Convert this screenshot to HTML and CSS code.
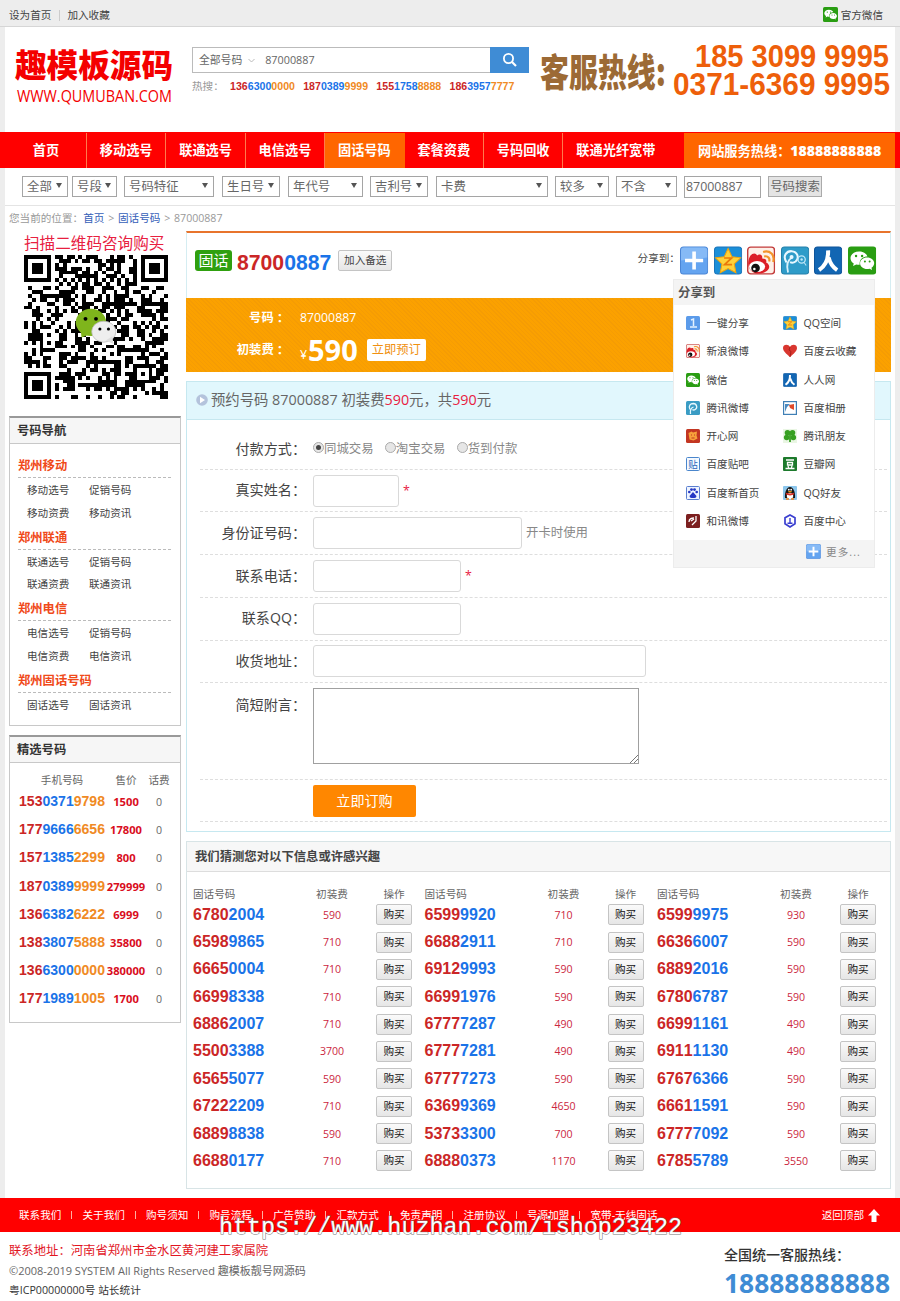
FILE: index.html
```html
<!DOCTYPE html>
<html lang="zh-CN">
<head>
<meta charset="utf-8">
<title>87000887</title>
<link rel="stylesheet" href="styles.css">
</head>
<body>
<svg class="defs" aria-hidden="true">
  <symbol id="wechat" viewBox="0 0 28 28"><rect width="28" height="28" rx="3" fill="#299d12"/><path d="M11 5c-5 0-8.500 3-8.500 6.700 0 2.200 1.200 4 3.200 5.200L5 19.500l3.200-1.600c1 .3 2 .4 3.400.4C11 12.500 15 10 19.300 10 18.500 7 15 5 11 5z" fill="#fff"/><path d="M19 11c-4 0-7 2.600-7 5.700S15 22.500 19 22.500c.8 0 1.600-.1 2.400-.4l2.600 1.400-.7-2.300c1.600-1 2.700-2.700 2.700-4.500 0-3.100-3-5.700-7-5.700z" fill="#fff"/><g fill="#299d12"><circle cx="8" cy="9.500" r="1.200"/><circle cx="14" cy="9.500" r="1.200"/><circle cx="16.800" cy="15" r="1"/><circle cx="21.500" cy="15" r="1"/></g></symbol>
  <symbol id="plus" viewBox="0 0 28 28"><rect x=".5" y=".5" width="27" height="27" rx="3" fill="#64a4f0" stroke="#4b86d6"/><path d="M1 14V4q0-3 3-3h20q3 0 3 3v7z" fill="#86baf6"/><path d="M14 5v18M5 14h18" stroke="#fff" stroke-width="3.600"/></symbol>
  <symbol id="star" viewBox="0 0 28 28"><rect x=".5" y=".5" width="27" height="27" rx="3" fill="#1b8fd8" stroke="#1a75bb"/><path d="M14 2l3.800 8.200 8.700 1.100-6.400 6.100 1.700 8.800L14 22l-7.800 4.200 1.700-8.800-6.400-6.100 8.700-1.100z" fill="#fdd23a" stroke="#f3a50c"/><path d="M10 11.500h7.500L10.500 18H18" fill="none" stroke="#ea7a0a" stroke-width="1.700"/></symbol>
  <symbol id="weibo" viewBox="0 0 28 28"><rect x=".7" y=".7" width="26.600" height="26.600" rx="3" fill="#fdf0e8" stroke="#c23a3a" stroke-width="1.400"/><path d="M2 12c2-6 7-6 8-3 2-2 6-1 5 3 3 0 5 1 4 4 6 3 3 10-7 11-8 0-13-7-10-15z" fill="#dc1f28"/><ellipse cx="10" cy="20" rx="8" ry="5.500" fill="#fff"/><circle cx="8.500" cy="21.500" r="4.300" fill="#111"/><circle cx="7.300" cy="22.500" r="1.300" fill="#fff"/><path d="M17 10c4-1 6 2 5 5M16 5.500c7-2 12 3 10 10" fill="none" stroke="#f3942b" stroke-width="2.200"/></symbol>
  <symbol id="tqq" viewBox="0 0 28 28"><rect x=".5" y=".5" width="27" height="27" rx="3" fill="#2f9cc9" stroke="#2580ab"/><path d="M7 26c-2-8 0-13 4-15" fill="none" stroke="#d8f1fb" stroke-width="1.800"/><path d="M5.500 16C1 9 6 4.500 10.500 4.700c6 .3 8 7 4 10.300-2 1.500-4 1.400-5.500.7" fill="none" stroke="#e8f8ff" stroke-width="2"/><circle cx="10.500" cy="10.500" r="2" fill="#e8f8ff"/><circle cx="20.500" cy="13" r="3.600" fill="none" stroke="#bfe6f7" stroke-width="1.300"/><circle cx="20.500" cy="13" r="1.200" fill="#bfe6f7"/><path d="M23 16l2 3" stroke="#bfe6f7"/></symbol>
  <symbol id="tqq-small" viewBox="0 0 14 14"><rect width="14" height="14" rx="1.500" fill="#3a9cc4"/><path d="M4.500 13c-.6-4 .2-6 3-7M4 8.500C2 5 4.500 2.500 7.200 2.500c3.800.2 4.600 4.500 2 6-1 .7-2 .6-2.800.2" fill="none" stroke="#e8f8ff" stroke-width="1.300"/></symbol>
  <symbol id="renren" viewBox="0 0 28 28"><rect x=".5" y=".5" width="27" height="27" rx="3" fill="#1266b3" stroke="#0e549a"/><path d="M14 4c.3 9-2 15-9 19.500M14.500 11c1.500 6 4 9.500 8.500 12.500" fill="none" stroke="#fff" stroke-width="4"/></symbol>
  <symbol id="one" viewBox="0 0 14 14"><rect width="14" height="14" rx="1.500" fill="#5b9bea"/><path d="M5 4l2.500-1v7M4 11h7" fill="none" stroke="#e5f2ff" stroke-width="1.500"/></symbol>
  <symbol id="heart" viewBox="0 0 14 14"><path d="M7 13C3 9.500 0 7 0 4c0-4 5.500-4 7-1 1.500-3 7-3 7 1 0 3-3 5.500-7 9z" fill="#d9362f"/><path d="M7 3l-1 3 2 1.500L7 13" stroke="#a8201c" fill="none"/></symbol>
  <symbol id="photo" viewBox="0 0 14 14"><rect x=".6" y=".6" width="12.800" height="12.800" fill="#fff" stroke="#3f7fb5" stroke-width="1.200"/><path d="M2 11V3h5L4 6z" fill="#4a8ac0"/><path d="M6 4l5-1v6L7 7z" fill="#e04a2a"/></symbol>
  <symbol id="kaixin" viewBox="0 0 14 14"><rect width="14" height="14" rx="1.500" fill="#c33622"/><path d="M2.500 4l3-1.500 1.500 1 4-1-.5 4 1 3-4 2-4-1z" fill="#f7a13b"/><path d="M5 6h1m2 0h1M5.500 9h3" stroke="#c33622"/></symbol>
  <symbol id="clover" viewBox="0 0 14 14"><rect width="14" height="14" fill="#e9f6e3"/><g fill="#37a022"><circle cx="4.500" cy="3.800" r="2.800"/><circle cx="9.500" cy="3.800" r="2.800"/><circle cx="3.700" cy="8.500" r="2.800"/><circle cx="10.300" cy="8.500" r="2.800"/></g><path d="M7 5v8" stroke="#37a022" stroke-width="1.800"/></symbol>
  <symbol id="paw" viewBox="0 0 14 14"><rect x=".5" y=".5" width="13" height="13" rx="1" fill="#eef4ff" stroke="#5a7fd0"/><g fill="#2638c4"><circle cx="3.300" cy="6" r="1.300"/><circle cx="5.500" cy="3.600" r="1.400"/><circle cx="8.500" cy="3.600" r="1.400"/><circle cx="10.700" cy="6" r="1.300"/><path d="M7 6l3.500 4q0 2-2 2h-3q-2 0-2-2z"/></g></symbol>
  <symbol id="qq" viewBox="0 0 14 14"><rect width="14" height="14" rx="1" fill="#8cc6ec"/><path d="M2 12C1.500 8 3 1 7 1s5.500 7 5 11z" fill="#171717"/><ellipse cx="7" cy="10" rx="3.200" ry="3" fill="#fff"/><path d="M3 7.500q4 2 8 0" stroke="#dd2f24" stroke-width="1.800" fill="none"/><ellipse cx="7" cy="5.800" rx="2" ry=".8" fill="#f5a21a"/><g fill="#fff"><circle cx="5.800" cy="3.700" r=".9"/><circle cx="8.200" cy="3.700" r=".9"/></g><path d="M3 13h3m2 0h3" stroke="#f5801a" stroke-width="1.500"/></symbol>
  <symbol id="hexun" viewBox="0 0 14 14"><rect width="14" height="14" rx="1.500" fill="#7c1f1f"/><path d="M10 2v5L6 11M3 8c0-4 3-4 5-4M5 7l3-2" stroke="#fff" stroke-width="1.300" fill="none"/></symbol>
  <symbol id="center" viewBox="0 0 14 14"><path d="M7 1l5 2.800v6L7 13 2 9.800v-6z" fill="#fff" stroke="#3a3fd0" stroke-width="1.700"/><path d="M7 4v5M4.500 9.300h5" stroke="#3a3fd0" stroke-width="1.400"/></symbol>
</svg>

<header class="topbar">
  <span>设为首页</span><i></i><span>加入收藏</span>
  <span class="official"><svg width="15" height="15"><use href="#wechat"/></svg>官方微信</span>
</header>

<div class="page">
  <div class="masthead">
    <svg class="logo" width="166" height="66">
      <text x="5" y="38" textLength="158" lengthAdjust="spacingAndGlyphs" class="logo-name">趣模板源码</text>
      <text x="7" y="63" textLength="155" lengthAdjust="spacingAndGlyphs" class="logo-url">WWW.QUMUBAN.COM</text>
    </svg>
    <div class="search">
      <div class="search-box">
        <span class="scope">全部号码</span>
        <svg width="7" height="5"><path d="M.5 1l3 3 3-3" fill="none" stroke="#bbb"/></svg>
        <span class="query">87000887</span>
        <span class="go"><svg width="16" height="16"><circle cx="6.500" cy="6.500" r="4.600" fill="none" stroke="#fff" stroke-width="1.800"/><path d="M10 10l4 4" stroke="#fff" stroke-width="2.200"/></svg></span>
      </div>
      <div class="hot"><span>热搜<b class="c">：</b></span><b data-n="13663000000"></b><b data-n="18703899999"></b><b data-n="15517588888"></b><b data-n="18639577777"></b></div>
    </div>
    <svg class="hotline" width="354" height="70">
      <text x="2" y="51" textLength="126" lengthAdjust="spacingAndGlyphs" class="hl-label">客服热线:</text>
      <text x="157" y="32" textLength="194" lengthAdjust="spacingAndGlyphs" class="hl-num">185 3099 9995</text>
      <text x="135" y="60" textLength="217" lengthAdjust="spacingAndGlyphs" class="hl-num">0371-6369 9995</text>
    </svg>
  </div>
</div>

<nav class="nav">
  <a>首页</a><a>移动选号</a><a>联通选号</a><a>电信选号</a><a class="on">固话号码</a><a>套餐资费</a><a>号码回收</a><a class="wide">联通光纤宽带</a>
  <span class="nav-tel">网站服务热线<b class="c">：</b><b class="lat">18888888888</b></span>
</nav>

<div class="page">
  <div class="filters">
    <span class="sel f1">全部</span><span class="sel f2">号段</span><span class="sel f3">号码特征</span><span class="sel f4">生日号</span><span class="sel f5">年代号</span><span class="sel f6">吉利号</span><span class="sel f7">卡费</span><span class="sel f8">较多</span><span class="sel f9">不含</span>
    <span class="fin">87000887</span><span class="fbtn">号码搜索</span>
  </div>
  <div class="crumbs">您当前的位置<b class="c">：</b><a>首页</a><i>&gt;</i><a>固话号码</a><i>&gt;</i>87000887</div>

  <main class="main">
    <aside>
      <div class="qr">
        <div class="qr-title">扫描二维码咨询购买</div>
        <svg id="qr" width="144" height="144" viewBox="0 0 37 37" shape-rendering="crispEdges"></svg>
      </div>
      <section class="box guide">
        <h3>号码导航</h3>
        <div class="guide-body">
          <h4>郑州移动</h4><p><a>移动选号</a><a>促销号码</a><a>移动资费</a><a>移动资讯</a></p>
          <h4>郑州联通</h4><p><a>联通选号</a><a>促销号码</a><a>联通资费</a><a>联通资讯</a></p>
          <h4>郑州电信</h4><p><a>电信选号</a><a>促销号码</a><a>电信资费</a><a>电信资讯</a></p>
          <h4>郑州固话号码</h4><p><a>固话选号</a><a>固话资讯</a></p>
        </div>
      </section>
      <section class="box picks">
        <h3>精选号码</h3>
        <div class="pick head"><span>手机号码</span><span>售价</span><span>话费</span></div>
        <div id="picks"></div>
      </section>
    </aside>

    <div class="content">
      <section class="product">
        <div class="product-head">
          <span class="tag">固话</span><b class="number" data-n="87000887"></b><span class="btn add">加入备选</span>
          <span class="share-label">分享到<b class="c">：</b></span>
          <div class="share-icons">
            <svg><use href="#plus"/></svg><svg><use href="#star"/></svg><svg><use href="#weibo"/></svg><svg><use href="#tqq"/></svg><svg><use href="#renren"/></svg><svg><use href="#wechat"/></svg>
          </div>
        </div>
        <div class="offer">
          <div class="offer-row"><b>号码<b class="c">：</b></b><span>87000887</span></div>
          <div class="offer-row"><b>初装费<b class="c">：</b></b><span class="yen">¥</span><strong>590</strong><span class="book">立即预订</span></div>
        </div>
        <div class="share-panel">
          <div class="sp-head">分享到</div>
          <div class="sp-grid" id="share"></div>
          <div class="sp-foot"><svg width="15" height="15"><use href="#plus"/></svg><span>更多...</span></div>
        </div>
      </section>

      <section class="order">
        <h2><svg width="12" height="12"><circle cx="6" cy="6" r="5.800" fill="#b4c3dc"/><path d="M4 2.800L9 6 4 9.200z" fill="#fff"/></svg>预约号码 87000887 初装费<em>590</em>元，共<em>590</em>元</h2>
        <div class="rows">
          <div class="row r1"><label>付款方式<b class="c">：</b></label><span class="radio on"></span><span class="opt">同城交易</span><span class="radio"></span><span class="opt">淘宝交易</span><span class="radio"></span><span class="opt">货到付款</span></div>
          <div class="row"><label>真实姓名<b class="c">：</b></label><span class="field w86"></span><em>*</em></div>
          <div class="row"><label>身份证号码<b class="c">：</b></label><span class="field w209"></span><small>开卡时使用</small></div>
          <div class="row r4"><label>联系电话<b class="c">：</b></label><span class="field w148"></span><em>*</em></div>
          <div class="row"><label>联系QQ<b class="c">：</b></label><span class="field w148"></span></div>
          <div class="row"><label>收货地址<b class="c">：</b></label><span class="field w333"></span></div>
          <div class="row note"><label>简短附言<b class="c">：</b></label><span class="area"><svg width="9" height="9"><path d="M1 9l8-8M5 9l4-4" stroke="#777"/></svg></span></div>
          <div class="row"><label></label><span class="submit">立即订购</span></div>
        </div>
      </section>

      <section class="guess">
        <h3>我们猜测您对以下信息或许感兴趣</h3>
        <div class="guess-grid" id="guess"></div>
      </section>
    </div>
  </main>
</div>

<footer>
  <div class="foot-nav">
    <a>联系我们</a><a>关于我们</a><a>购号须知</a><a>购号流程</a><a>广告赞助</a><a>汇款方式</a><a>免责声明</a><a>注册协议</a><a>号源加盟</a><a>宽带-无线固话</a>
    <span class="back">返回顶部<svg width="12" height="13"><path d="M6 0l6 6.500H8.500V13h-5V6.500H0z" fill="#fff"/></svg></span>
    <svg class="mark" width="480" height="34"><text x="8" y="23" textLength="463" lengthAdjust="spacingAndGlyphs">https://www.huzhan.com/ishop23422</text></svg>
  </div>
  <div class="foot-info">
    <div class="legal">
      <p class="addr">联系地址<b class="c">：</b>河南省郑州市金水区黄河建工家属院</p>
      <p class="copy">©2008-2019 SYSTEM All Rights Reserved 趣模板靓号网源码</p>
      <p class="icp">粤ICP00000000号 站长统计</p>
    </div>
    <div class="service"><p>全国统一客服热线<b class="c">：</b></p><strong>18888888888</strong></div>
  </div>
</footer>
<script src="app.js"></script>
</body>
</html>
```

FILE: styles.css
```css
* { box-sizing: border-box; font-kerning: none !important; }
body {
  margin: 0;
  background: #ededed;
  color: #444;
  font: 10.6px/16px "Open Sans", "Noto Sans CJK SC", sans-serif;
}
h2, h3, h4, p { margin: 0; }
svg { display: block; flex: none; overflow: visible; }
em { font-style: normal; }
.defs { position: absolute; width: 0; height: 0; }
.c { font-family: "Noto Sans CJK TC", sans-serif; font-weight: inherit; }
.page { width: 890px; margin: 0 auto; background: #fff; }

/* Top bar */
.topbar { height: 27px; padding: 4px 17px 0 9px; display: flex; align-items: center; border-bottom: 1px solid #d6d6d6; }
.topbar i { width: 1px; height: 11px; margin: 0 7px 0 8px; background: #ccc; }
.official { margin-left: auto; display: flex; align-items: center; gap: 3px; }
.official svg { margin-top: -2px; }

/* Masthead */
.masthead { height: 105px; display: flex; }
.logo { margin: 12px 16px 0 5px; }
.logo-name { font: 900 32px "Noto Sans CJK SC", sans-serif; fill: #f40000; }
.logo-url { font: 15.500px "Open Sans", sans-serif; fill: #f40000; }
.search { width: 337px; padding-top: 20px; }
.search-box { height: 26px; display: flex; align-items: center; border: 1px solid #bbb; border-right: 0; font-size: 10.800px; color: #666; }
.scope { margin: 0 6px 0 6px; }
.query { margin-left: 10px; }
.go { width: 39px; height: 26px; margin-left: auto; background: #3f8cd5; display: grid; place-items: center; }
.hot { margin-top: 5px; display: flex; gap: 8.300px; color: #999; }
.hot > span { margin-right: -2px; white-space: nowrap; }
.hot > b { font: bold 10.600px/16px "Liberation Sans", sans-serif; }
.n1 { color: #cb2626; }
.n2 { color: #1a73e8; }
.n3 { color: #f08a24; }
.hotline { margin: 8px 0 0 9px; }
.hl-label { font: 900 38px "Noto Sans CJK SC", sans-serif; fill: #9c6a35; }
.hl-num { font: bold 32px "Liberation Sans", sans-serif; fill: #ee5f0a; }

/* Main navigation */
.nav { height: 36px; padding: 1px 5px 0; display: flex; background: #f00; color: #fff; font-size: 13.200px; font-weight: bold; line-height: 35px; }
.nav a { width: 79.400px; text-align: center; border-right: 1px solid #ff7a4d; }
.nav a:first-child { width: 82px; padding-left: 1px; }
.nav a.on { background: #f60; border-color: #f60; }
.nav a.wide { width: 120px; padding-left: 13px; text-align: left; border: 0; }
.nav-tel { width: 211px; margin-left: auto; padding-left: 14px; background: #f60; white-space: nowrap; }
.lat { font-size: 14.100px; }

/* Filters */
.filters { height: 38px; padding: 0 17px; display: flex; align-items: center; border-bottom: 1px solid #e4e4e4; font-size: 12.400px; color: #666; }
.sel { height: 21px; padding-left: 4px; line-height: 19px; border: 1px solid #a5a5a5; display: flex; align-items: center; justify-content: space-between; }
.sel::after { content: ""; margin: 0 5px 2px 0; border: 3px solid transparent; border-top: 5px solid #555; border-bottom: 0; }
.f1 { width: 46px; }
.f2 { width: 45px; margin-left: 4px; }
.f3 { width: 90px; margin-left: 7px; }
.f4 { width: 58px; margin-left: 8px; }
.f5 { width: 75px; margin-left: 8px; }
.f6 { width: 58px; margin-left: 7px; }
.f7 { width: 112px; margin-left: 8px; }
.f8 { width: 54px; margin-left: 7px; }
.f9 { width: 61px; margin-left: 7px; }
.fin { width: 77px; height: 22px; margin-left: 7px; padding-left: 1px; border: 1px solid #a5a5a5; line-height: 20px; }
.fbtn { width: 54px; height: 21px; margin-left: 7px; border: 1px solid #aaa; background: #e4e4e4; line-height: 19px; text-align: center; white-space: nowrap; }
.crumbs { height: 25px; padding: 0 4px; line-height: 24px; color: #999; font-size: 10.600px; }
.crumbs a { color: #3560b8; }
.crumbs i { margin: 0 3.800px; font-style: normal; }

/* Two-column body */
.main { height: 967px; padding: 0 4px; display: grid; grid-template-columns: 172px 705px; gap: 5px; }
.qr { height: 185px; padding: 3px 0 0 15px; }
.qr-title { height: 21px; color: #e8203f; font-size: 15.600px; line-height: 18px; white-space: nowrap; }
.box { border: 1px solid #c8c8c8; border-top: 2px solid #999; }
.box h3 { height: 26px; padding-left: 7px; background: #f6f6f6; border-bottom: 1px solid #c8c8c8; font-size: 12.300px; line-height: 25px; color: #333; }
.guide { height: 310px; margin-bottom: 9px; }
.guide-body { padding: 11px 9px 0 8px; }
.guide h4 { height: 23px; border-bottom: 1px dashed #bbb; color: #f04a1a; font-size: 12.300px; line-height: 21px; }
.guide p { padding: 1px 0 2px 9px; display: grid; grid-template-columns: 62px 62px; line-height: 22.750px; }
.picks { height: 288px; }
.pick { display: grid; grid-template-columns: 86px 42px 24px; height: 28.200px; margin-left: 9px; align-items: center; text-align: center; color: #666; }
.pick.head { height: 24px; padding-top: 9px; }
.pick b { font: bold 14.060px/20px "Liberation Sans", sans-serif; }
.pick strong { color: #d90d1d; font-size: 11.200px; padding-top: 2px; }
.pick i { font-style: normal; padding-top: 2px; }

/* Product */
.product { position: relative; height: 141px; border-top: 2px solid #e8742c; border-left: 1px solid #d5edf2; border-right: 1px solid #d5edf2; }
.product-head { height: 65px; padding: 0 14px 10px 8px; display: flex; align-items: center; }
.tag { width: 37px; height: 21px; border-radius: 3px; background: #2fa00f; color: #fff; font-size: 15px; line-height: 20px; text-align: center; }
.number { margin: 5px 7px 0 5px; font: bold 21.200px/24px "Liberation Sans", sans-serif; }
.btn { border: 1px solid #c4c4c4; border-radius: 2px; background: linear-gradient(#fafafa, #e6e6e6); text-align: center; }
.add { width: 54px; height: 21px; line-height: 18px; }
.share-label { margin: -6px 0 0 auto; white-space: nowrap; }
.share-label .c { margin-right: -6px; }
.share-icons { margin-left: 6px; display: flex; gap: 5.400px; }
.share-icons svg { width: 28.200px; height: 29px; }
.offer { height: 74px; margin: 0 -1px; padding: 9px 0 0 50px; background: repeating-linear-gradient(45deg, #fba100 0 2px, #f59c04 2px 3px); color: #fff; font-size: 12.300px; }
.offer-row { display: flex; align-items: center; height: 22px; }
.offer-row > b:first-child { width: 50px; text-align: right; margin-right: 14px; white-space: nowrap; display: flex; justify-content: flex-end; }
.offer-row + .offer-row { height: 42px; }
.yen { align-self: flex-end; margin-bottom: 8px; }
.offer strong { margin-left: 1px; font-size: 29px; line-height: 30px; }
.book { width: 59px; height: 22px; margin-left: 9px; border-radius: 2px; background: #fff; color: #f09010; line-height: 21px; text-align: center; }
.share-panel { position: absolute; left: 486px; top: 46px; width: 202px; height: 289px; border: 1px solid #ececec; background: #fff; }
.sp-head { height: 25px; padding-left: 4px; background: #f4f4f4; font-size: 12.400px; font-weight: bold; line-height: 25px; color: #555; }
.sp-grid { display: grid; grid-template-columns: 97px 97px; grid-auto-rows: 28.250px; padding: 4px 0 0 12px; height: 235px; }
.sp-grid span { display: flex; align-items: center; gap: 6.500px; white-space: nowrap; }
.sp-foot { height: 27px; padding: 0 13px 4px 0; background: #f4f4f4; display: flex; align-items: center; justify-content: flex-end; gap: 5px; color: #888; }
.sp-foot span { letter-spacing: 1.100px; }

/* Order form */
.order { height: 451px; margin-top: 9px; border: 1px solid #c6e8f0; }
.order h2 { height: 38px; padding: 0 0 1px 9px; display: flex; align-items: center; background: #e1f7fd; border-bottom: 1px solid #c6e8f0; color: #666; font-size: 14.350px; font-weight: normal; white-space: pre; }
.order h2 svg { margin-right: 3px; }
.order em { color: #e8203f; }
.rows { padding: 0 3px 0 13px; }
.row { height: 42.400px; display: flex; align-items: center; border-bottom: 1px dashed #dedede; font-size: 12.400px; color: #888; }
.row label { width: 106px; margin-right: 7px; padding-bottom: 2px; text-align: right; color: #444; font-size: 14.100px; white-space: nowrap; }
.row em { margin-left: 4px; font-size: 12.400px; }
.r1 { height: 50px; padding-top: 9px; }
.r4 { height: 43.500px; }
.row small { margin-left: 4px; font-size: 12.400px; }
.radio { width: 11px; height: 11px; margin-top: -3px; border: 1px solid #aaa; border-radius: 50%; background: #e6e6e6; display: grid; place-items: center; }
.radio.on::after { content: ""; width: 5px; height: 5px; border-radius: 50%; background: #444; }
.opt { margin: 0 11.300px 0 0; }
.field { height: 32px; border: 1px solid #d9d9d9; border-radius: 3px; }
.w86 { width: 86px; }
.w209 { width: 209px; }
.w148 { width: 148px; }
.w333 { width: 333px; }
.row.note { height: 97px; align-items: flex-start; padding-top: 5px; }
.note label { line-height: 32px; }
.area { width: 326px; height: 76px; border: 1px solid #a0a0a0; display: flex; align-items: flex-end; justify-content: flex-end; }
.submit { width: 103px; height: 32px; border-radius: 2px; background: #ff8700; color: #fff; font-size: 14.100px; line-height: 32px; text-align: center; }

/* Suggestions */
.guess { height: 348px; margin-top: 9px; border: 1px solid #d8e4e6; }
.guess h3 { height: 30px; padding-left: 8px; background: #f7f7f7; border-bottom: 1px solid #ddd; font-size: 12.350px; line-height: 30px; }
.guess-grid { display: grid; grid-template-columns: 231.500px 232.500px 230px; padding: 14px 0 0 6px; }
.cell { display: grid; grid-template-columns: 109px 60px 14px 36px; height: 27.360px; align-items: center; }
.cell.head { height: 15px; color: #666; }
.cell > :nth-child(2) { text-align: center; color: #cb2640; }
.cell.head > :nth-child(2) { color: #666; }
.cell > :nth-child(3) { grid-column: 4; text-align: center; }
.cell b { font: bold 16px/22px "Liberation Sans", sans-serif; }
.cell .btn { height: 21px; line-height: 19px; color: #111; }

/* Footer */
.foot-nav { position: relative; height: 34px; padding: 0 20px 0 19px; background: #f00; color: #fff; display: flex; align-items: center; }
.foot-nav a { width: 63.500px; white-space: nowrap; display: flex; align-items: center; }
.foot-nav a:not(:nth-child(10))::after { content: ""; width: 1px; height: 8px; margin-left: 10px; background: #ffb0a0; }
.back { margin-left: auto; display: flex; align-items: center; gap: 4px; }
.mark { position: absolute; left: 211px; top: 13px; }
.mark text { font: 24px "Liberation Mono", monospace; fill: #fff; stroke: #777; stroke-width: 1.100px; paint-order: stroke; }
.foot-info { height: 69px; padding: 0 10px 0 9px; display: flex; justify-content: space-between; background: #fff; }
.legal { padding-top: 8px; }
.addr { color: #e2151f; font-size: 12.350px; line-height: 20px; }
.copy { color: #666; font-size: 11px; line-height: 20px; }
.icp { color: #333; font-size: 10.700px; line-height: 19px; }
.service { padding-top: 12px; }
.service p { font-size: 14px; line-height: 20px; font-weight: 500; color: #333; }
.service strong { display: block; color: #3f8cd5; font-size: 26.400px; line-height: 36px; }
```

FILE: app.js
```js
// Splits a number into coloured groups: 3-4-4 for mobiles, 4-4 for landlines.
function paint(n) {
  const cuts = n.length === 11 ? [0, 3, 7, 11] : [0, 4, 8];
  let out = '';
  for (let i = 0; i < cuts.length - 1; i++) {
    out += '<span class="n' + (i + 1) + '">' + n.slice(cuts[i], cuts[i + 1]) + '</span>';
  }
  return out;
}
document.querySelectorAll('[data-n]').forEach(e => { e.innerHTML = paint(e.dataset.n); });

const picks = [['15303719798', 1500], ['17796666656', 17800], ['15713852299', 800], ['18703899999', 279999],
  ['13663826222', 6999], ['13838075888', 35800], ['13663000000', 380000], ['17719891005', 1700]];
document.getElementById('picks').innerHTML = picks.map(p =>
  '<div class="pick"><b>' + paint(p[0]) + '</b><strong>' + p[1] + '</strong><i>0</i></div>').join('');

const lines = [
  '67802004 590 65999920 710 65999975 930', '65989865 710 66882911 710 66366007 590',
  '66650004 710 69129993 590 68892016 590', '66998338 710 66991976 590 67806787 590',
  '68862007 710 67777287 490 66991161 490', '55003388 3700 67777281 490 69111130 490',
  '65655077 590 67777273 590 67676366 590', '67222209 710 63699369 4650 66611591 590',
  '68898838 590 53733300 700 67777092 590', '66880177 710 68880373 1170 67855789 3550'];
const head = '<div class="cell head"><span>固话号码</span><span>初装费</span><span>操作</span></div>';
document.getElementById('guess').innerHTML = head + head + head + lines.map(l => {
  const v = l.split(' ');
  return [0, 2, 4].map(i => '<div class="cell"><b>' + paint(v[i]) + '</b><span>' + v[i + 1] +
    '</span><span class="btn">购买</span></div>').join('');
}).join('');

const share = [['one', '一键分享'], ['star', 'QQ空间'], ['weibo', '新浪微博'], ['heart', '百度云收藏'],
  ['wechat', '微信'], ['renren', '人人网'], ['tqq-small', '腾讯微博'], ['photo', '百度相册'],
  ['kaixin', '开心网'], ['clover', '腾讯朋友'], ['tie', '百度贴吧'], ['dou', '豆瓣网'],
  ['paw', '百度新首页'], ['qq', 'QQ好友'], ['hexun', '和讯微博'], ['center', '百度中心']];
const glyphs = {
  tie: '<rect x=".5" y=".5" width="13" height="13" rx="1" fill="#f4f9ff" stroke="#4a86cc"/><text x="7" y="10.500" font-size="9.500" text-anchor="middle" fill="#2a66bb">贴</text>',
  dou: '<rect width="14" height="14" rx="1" fill="#1d7a2c"/><path d="M3 3h8M4.500 5.500h5v2.500h-5zM5 9l.7 2M9 9l-.7 2M2.500 11.500h9" fill="none" stroke="#fff" stroke-width="1.300"/>'
};
document.getElementById('share').innerHTML = share.map(s => '<span><svg width="14" height="14">' +
  (glyphs[s[0]] || '<use href="#' + s[0] + '"/>') + '</svg>' + s[1] + '</span>').join('');

// QR code: 37 x 37 modules, three finders, one alignment mark, timing lines.
(function () {
  const N = 37;
  let seed = 20190;
  const next = () => { seed = (seed * 1103515245 + 12345) % 2147483648; return seed / 2147483648; };
  const ring = (x, y, cx, cy) => Math.max(Math.abs(x - cx), Math.abs(y - cy));
  let d = '';
  for (let y = 0; y < N; y++) {
    for (let x = 0; x < N; x++) {
      let on = next() < 0.5;
      if (x === 6 || y === 6) on = (x + y) % 2 === 0;
      const a = ring(x, y, 30, 30);
      if (a <= 2) on = a !== 1;
      [[3, 3], [33, 3], [3, 33]].forEach(c => {
        const r = ring(x, y, c[0], c[1]);
        if (r <= 4) on = r !== 4 && r !== 2;
      });
      if (on) d += 'M' + x + ' ' + y + 'h1v1h-1z';
    }
  }
  document.getElementById('qr').innerHTML = '<path d="' + d + '"/>' +
    '<g shape-rendering="auto"><ellipse cx="17.200" cy="17.300" rx="3.900" ry="3.500" fill="#7fb51c"/><path d="M14.500 19l.3 2.200 2.500-1z" fill="#7fb51c"/>' +
    '<circle cx="15.800" cy="16.400" r=".5"/><circle cx="18.500" cy="16.400" r=".5"/>' +
    '<ellipse cx="20.500" cy="19.700" rx="3.100" ry="2.700" fill="#eee" stroke="#bbb" stroke-width=".2"/><path d="M21 22l2 .9-.3-2z" fill="#ddd"/>' +
    '<circle cx="19.500" cy="19" r=".4"/><circle cx="21.700" cy="19" r=".4"/></g>';
})();
```
